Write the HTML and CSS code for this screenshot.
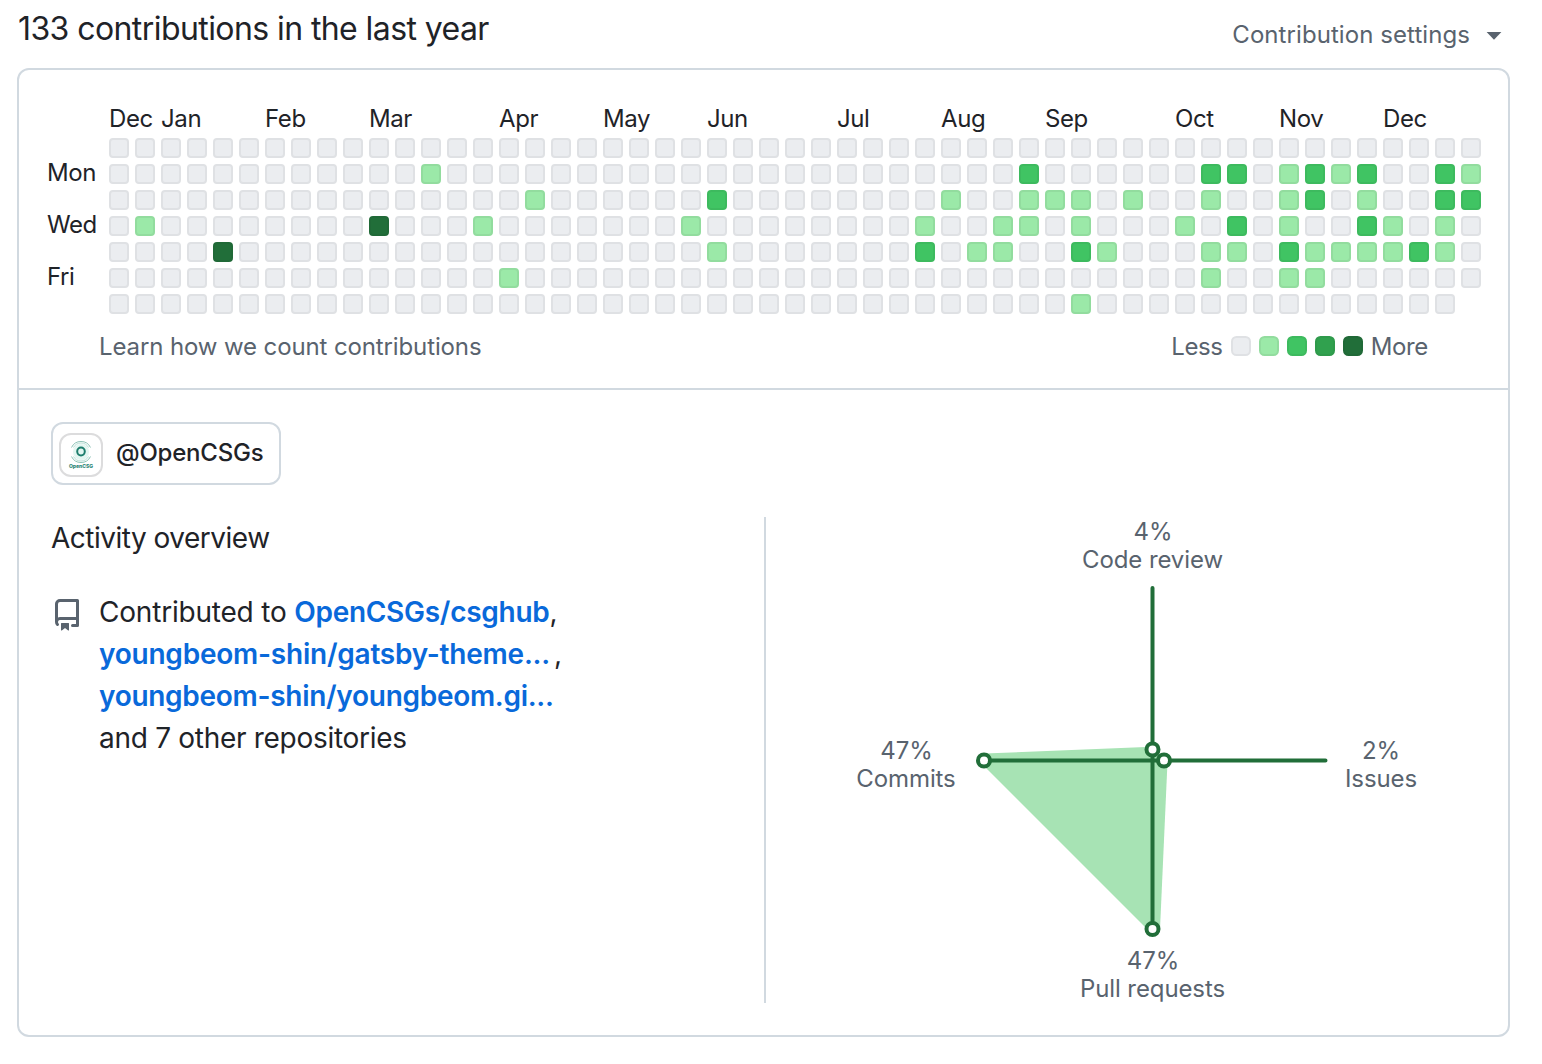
FILE: index.html
```html
<!DOCTYPE html>
<html lang="en">
<head>
<meta charset="utf-8">
<title>Contributions</title>
<link rel="stylesheet" href="styles.css">
</head>
<body>
<header class="top">
  <h2 class="title">133 contributions in the last year</h2>
  <button class="settings"><span>Contribution settings</span><svg class="caret" viewBox="0 0 16 8"><path d="M0.6 0h14.8L8 7.8z"/></svg></button>
</header>
<main class="panel">
  <section class="calendar">
    <div class="months" id="months"></div>
    <div class="days"><span class="mon">Mon</span><span class="wed">Wed</span><span class="fri">Fri</span></div>
    <div class="cells" id="cells"></div>
    <footer class="foot">
      <a class="learn">Learn how we count contributions</a>
      <div class="legend"><span>Less</span><i class="cell"></i><i class="cell l1"></i><i class="cell l2"></i><i class="cell l3"></i><i class="cell l4"></i><span>More</span></div>
    </footer>
  </section>
  <section class="activity">
    <a class="org">
      <svg class="avatar" viewBox="0 0 44 44">
        <rect x="1" y="1" width="42" height="42" rx="11" fill="#fff" stroke="#dcdcdd" stroke-width="2"/>
        <circle cx="22" cy="19" r="8" fill="#e3f6f1"/>
        <g fill="none" stroke="#8fc4b8" stroke-width="1"><path d="M12.500 14.500a10.500 10.500 0 0 1 19 0M12.500 23.500a10.500 10.500 0 0 0 19 0"/><path d="M14.500 14.500a8.500 8.500 0 0 1 15 0M14.500 23.500a8.500 8.500 0 0 0 15 0" stroke="#b9ded6"/></g>
        <ellipse cx="22" cy="18.500" rx="3.800" ry="3.900" fill="#e3f6f1" stroke="#1d7d6c" stroke-width="2"/>
        <text x="22" y="35" text-anchor="middle" class="logo-text">OpenCSG</text>
      </svg>
      <span>@OpenCSGs</span>
    </a>
    <div class="columns">
      <div class="overview">
        <h3 class="subtitle">Activity overview</h3>
        <div class="repos">
          <svg class="repo" viewBox="0 0 16 16"><path d="M2 2.500A2.500 2.500 0 0 1 4.500 0h8.750a.75.75 0 0 1 .75.75v12.500a.75.75 0 0 1-.75.75h-2.500a.75.75 0 0 1 0-1.500h1.750v-2h-8a1 1 0 0 0-.714 1.700.75.75 0 1 1-1.072 1.050A2.495 2.495 0 0 1 2 11.500Zm10.500-1h-8a1 1 0 0 0-1 1v6.708A2.486 2.486 0 0 1 4.500 9h8ZM5 12.250a.25.25 0 0 1 .25-.25h3.500a.25.25 0 0 1 .25.25v3.250a.25.25 0 0 1-.4.2l-1.450-1.087a.249.249 0 0 0-.3 0L5.400 15.700a.25.25 0 0 1-.4-.2Z"/></svg>
          <p class="list"><span class="lead">Contributed to </span><a class="first">OpenCSGs/csghub</a>,<br><a class="second">youngbeom-shin/gatsby-theme...</a><span class="comma">,</span><br><a class="third">youngbeom-shin/youngbeom.gi...</a><br><span class="rest">and 7 other repositories</span></p>
        </div>
      </div>
      <div class="chart">
        <svg width="742" height="486" viewBox="766 517 742 486">
          <path class="area" d="M984 753.600L1152 746.800L1167.500 762L1160 929L1152.500 934.500L980 762Z"/>
          <path class="axis" d="M1152.500 588V929M984 760.500H1325.500"/>
          <g class="dots"><circle cx="984" cy="760.500" r="6"/><circle cx="1152.500" cy="749.500" r="6"/><circle cx="1164" cy="760.500" r="6"/><circle cx="1152.500" cy="929" r="6"/></g>
          <g class="labels">
            <text x="1153" y="540">4%</text><text x="1152.500" y="568">Code review</text>
            <text x="906.500" y="759">47%</text><text x="906" y="787">Commits</text>
            <text x="1381" y="759">2%</text><text x="1381" y="787">Issues</text>
            <text x="1153" y="969">47%</text><text x="1152.500" y="997">Pull requests</text>
          </g>
        </svg>
      </div>
    </div>
  </section>
</main>
<script src="calendar.js"></script>
</body>
</html>
```
FILE: styles.css
```css
* { box-sizing: border-box; }
body { margin: 0; width: 1542px; height: 1064px; padding: 0 32px 0 17px; background: #fff; color: #1f2328; font-family: Inter, "Liberation Sans", sans-serif; font-size: 24px; overflow: hidden; }
.top { height: 68px; display: flex; justify-content: space-between; padding-right: 8px; }
.title { margin: 5px 0 0 1px; font-size: 32px; line-height: 48px; font-weight: 400; letter-spacing: -0.58px; }
.settings { display: flex; align-items: center; gap: 16px; height: 36px; margin-top: 16px; padding: 0; border: 0; background: none; color: #59636e; font: inherit; letter-spacing: 0.07px; }
.caret { width: 16px; height: 8px; fill: #59636e; margin-top: 4px; }
.panel { height: 969px; border: 2px solid #d1d9e0; border-radius: 12px; }
.calendar { height: 320px; border-bottom: 2px solid #d1d9e0; padding: 32px 26px 0 28px; display: grid; grid-template: 36px 176px 1fr / 62px 1372px; }
.months { grid-column: 2; display: grid; grid-template-columns: repeat(53, 20px); column-gap: 6px; line-height: 34px; letter-spacing: -0.4px; }
.months span { white-space: nowrap; width: 0; }
.days { display: grid; grid-template-rows: repeat(7, 20px); row-gap: 6px; line-height: 18px; letter-spacing: -0.4px; }
.mon { grid-row: 2; }
.wed { grid-row: 4; }
.fri { grid-row: 6; }
.cells { display: grid; grid-template-rows: repeat(7, 20px); grid-auto-flow: column; grid-auto-columns: 20px; gap: 6px; }
.cell { display: block; width: 20px; height: 20px; border-radius: 4px; background: #ebedf0; border: 2px solid #dfe1e4; }
.l1 { background: #9be9a8; border-color: #92dc9e; }
.l2 { background: #40c463; border-color: #3dba5e; }
.l3 { background: #30a14e; border-color: #2f9a4b; }
.l4 { background: #216e39; border-color: #206937; }
.foot { grid-column: 1 / 3; display: flex; justify-content: space-between; align-items: flex-start; padding: 14px 53px 0 52px; color: #59636e; line-height: 36px; }
.learn { letter-spacing: -0.12px; margin-top: 1px; }
.legend { display: flex; align-items: center; gap: 8px; letter-spacing: -0.35px; }
.legend span { position: relative; top: 1px; }
.legend .cell { border-radius: 5.5px; }
.activity { padding: 32px; }
.org { display: flex; align-items: center; width: 230px; height: 63px; border: 2px solid #d1d9e0; border-radius: 12px; padding: 0 6px; gap: 13px; font-weight: 500; letter-spacing: -0.2px; }
.org span { margin-top: -2px; }
.avatar { width: 44px; height: 44px; flex: none; margin-top: 2px; }
.logo-text { font-size: 5px; font-weight: 800; fill: #2c8575; letter-spacing: 0; }
.columns { display: flex; height: 486px; margin: 32px -32px 0 0; }
.overview { width: 715px; border-right: 2px solid #d1d9e0; }
.subtitle { margin: 0; font-size: 28px; line-height: 42px; font-weight: 400; letter-spacing: -0.5px; }
.repos { display: flex; gap: 16px; margin-top: 32px; }
.repo { width: 32px; height: 32px; fill: #59636e; margin-top: 8px; }
.list { margin: 0; font-size: 28px; line-height: 42px; white-space: nowrap; }
.list a { color: #0969da; font-weight: 600; }
.lead { letter-spacing: -0.2px; }
.list .first { letter-spacing: -0.28px; }
.list .second { letter-spacing: -0.23px; }
.list .third { letter-spacing: -0.29px; }
.rest { letter-spacing: -0.29px; }
.comma { margin-left: 4px; }
.chart svg { display: block; }
.area { fill: #a7e3b4; }
.axis { fill: none; stroke: #216e39; stroke-width: 4; stroke-linecap: round; }
.dots { fill: #fff; stroke: #216e39; stroke-width: 4; }
.labels { fill: #59636e; text-anchor: middle; letter-spacing: -0.1px; }
```
FILE: calendar.js
```js
const monthColumns = { 1: 'Dec', 3: 'Jan', 7: 'Feb', 11: 'Mar', 16: 'Apr', 20: 'May', 24: 'Jun', 29: 'Jul', 33: 'Aug', 37: 'Sep', 42: 'Oct', 46: 'Nov', 50: 'Dec' };
const months = document.getElementById('months');
for (const [column, name] of Object.entries(monthColumns)) {
  const label = document.createElement('span');
  label.textContent = name;
  label.style.gridColumn = column;
  months.append(label);
}

// Levels per week, Sunday first; weeks not listed are empty.
const weeks = {
  1: '0001000', 4: '0000400', 10: '0004000', 12: '0100000', 14: '0001000', 15: '0000010',
  16: '0010000', 22: '0001000', 23: '0020100', 31: '0001200', 32: '0010000', 33: '0000100',
  34: '0001100', 35: '0211000', 36: '0010000', 37: '0011201', 38: '0000100', 39: '0010000',
  41: '0001000', 42: '0210110', 43: '0202100', 45: '0111210', 46: '0220110', 47: '0100100',
  48: '0212100', 49: '0001100', 50: '0000200', 51: '0221100', 52: '012000'
};
const cells = document.getElementById('cells');
for (let week = 0; week < 53; week++) {
  for (const level of weeks[week] || '0000000') {
    const cell = document.createElement('i');
    cell.className = level === '0' ? 'cell' : `cell l${level}`;
    cells.append(cell);
  }
}
```
